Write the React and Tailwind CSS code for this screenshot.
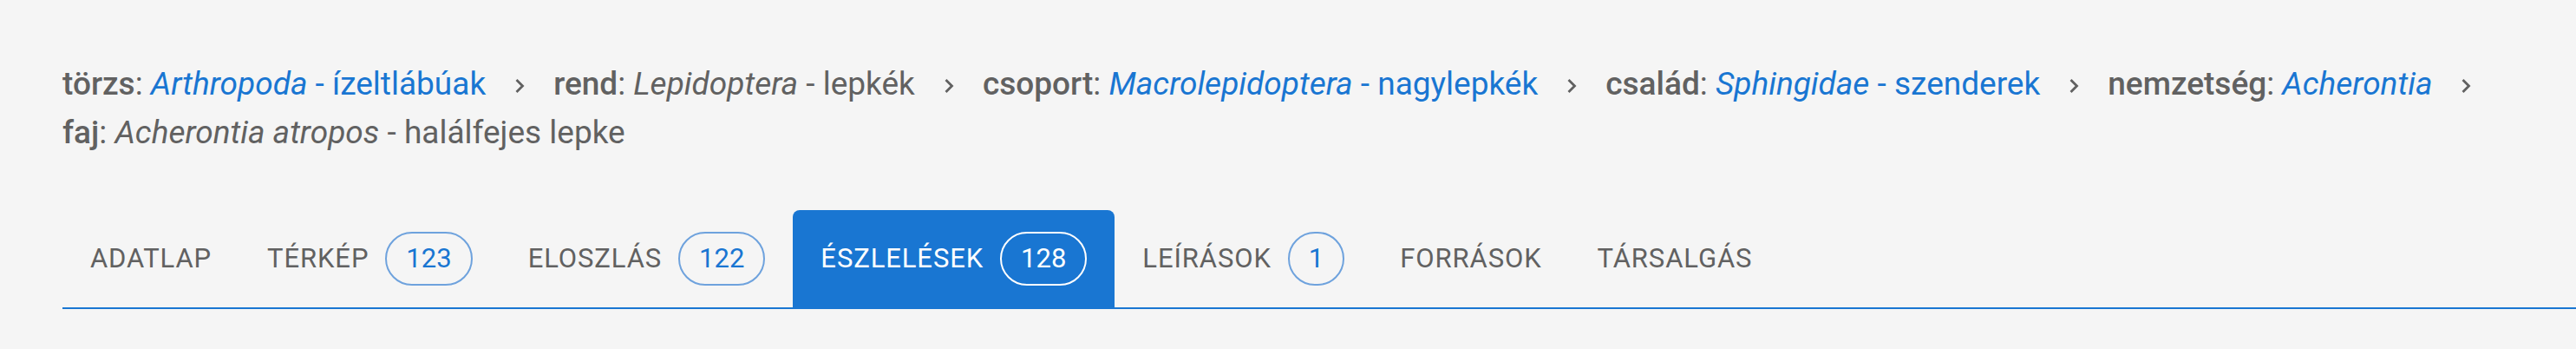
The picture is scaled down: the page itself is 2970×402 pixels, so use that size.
import React from 'react'

const ranks = [
    { label: 'törzs', latin: 'Arthropoda', hu: 'ízeltlábúak', link: true },
    { label: 'rend', latin: 'Lepidoptera', hu: 'lepkék', link: false },
    { label: 'csoport', latin: 'Macrolepidoptera', hu: 'nagylepkék', link: true },
    { label: 'család', latin: 'Sphingidae', hu: 'szenderek', link: true },
    { label: 'nemzetség', latin: 'Acherontia', hu: null, link: true },
    { label: 'faj', latin: 'Acherontia atropos', hu: 'halálfejes lepke', link: false },
];

const tabs = [
    { name: 'ADATLAP' },
    { name: 'TÉRKÉP', count: 123 },
    { name: 'ELOSZLÁS', count: 122 },
    { name: 'ÉSZLELÉSEK', count: 128, active: true },
    { name: 'LEÍRÁSOK', count: 1 },
    { name: 'FORRÁSOK' },
    { name: 'TÁRSALGÁS' },
];

function Chevron() {
    return (
        <svg width="12" height="18" viewBox="0 0 12 18" className="shrink-0 mt-[4px]">
            <polyline points="2.5,2 9.5,9 2.5,16" fill="none" stroke="#616161" strokeWidth="2.8" />
        </svg>
    );
}

function Rank({ rank }) {
    const color = rank.link ? 'text-[#1976d2]' : 'text-[#616161]';
    return (
        <span className="whitespace-nowrap">
            <span className="font-medium text-[#616161]">{rank.label}</span>
            <span className="text-[#616161]">: </span>
            <span className={color}>
                <i>{rank.latin}</i>
                {rank.hu && <span> - {rank.hu}</span>}
            </span>
        </span>
    );
}

function Tab({ tab }) {
    return (
        <div
            className={`h-[112px] px-8 flex items-center gap-[19px] text-[31px] tracking-[0.9px] ${tab.active ? 'bg-[#1976d2] text-white rounded-t-[8px]' : 'text-[#616161]'}`}
        >
            <span>{tab.name}</span>
            {tab.count !== undefined && (
                <span
                    className={`h-[62px] min-w-[62px] px-[22px] rounded-full border-2 flex items-center justify-center tracking-normal ${tab.active ? 'border-white text-white' : 'border-[#6ea2dd] text-[#1976d2]'}`}
                >
                    {tab.count}
                </span>
            )}
        </div>
    );
}

function App() {
    return (
        <div className="w-[2970px] h-[402px] bg-[#f5f5f5] overflow-hidden" style={{ fontFamily: 'Roboto, "Noto Sans", sans-serif' }}>
            <div className="pl-[72px] pt-[69px] text-[37px] leading-[56px] flex flex-wrap items-center gap-x-[33px]">
                {ranks.map((rank, i) => (
                    <React.Fragment key={rank.label}>
                        <Rank rank={rank} />
                        {i < ranks.length - 1 && <Chevron />}
                    </React.Fragment>
                ))}
            </div>
            <div className="ml-[72px] mt-[61px] flex items-end border-b-2 border-[#1976d2]">
                {tabs.map((tab) => (
                    <Tab key={tab.name} tab={tab} />
                ))}
            </div>
        </div>
    );
}

export default App;
